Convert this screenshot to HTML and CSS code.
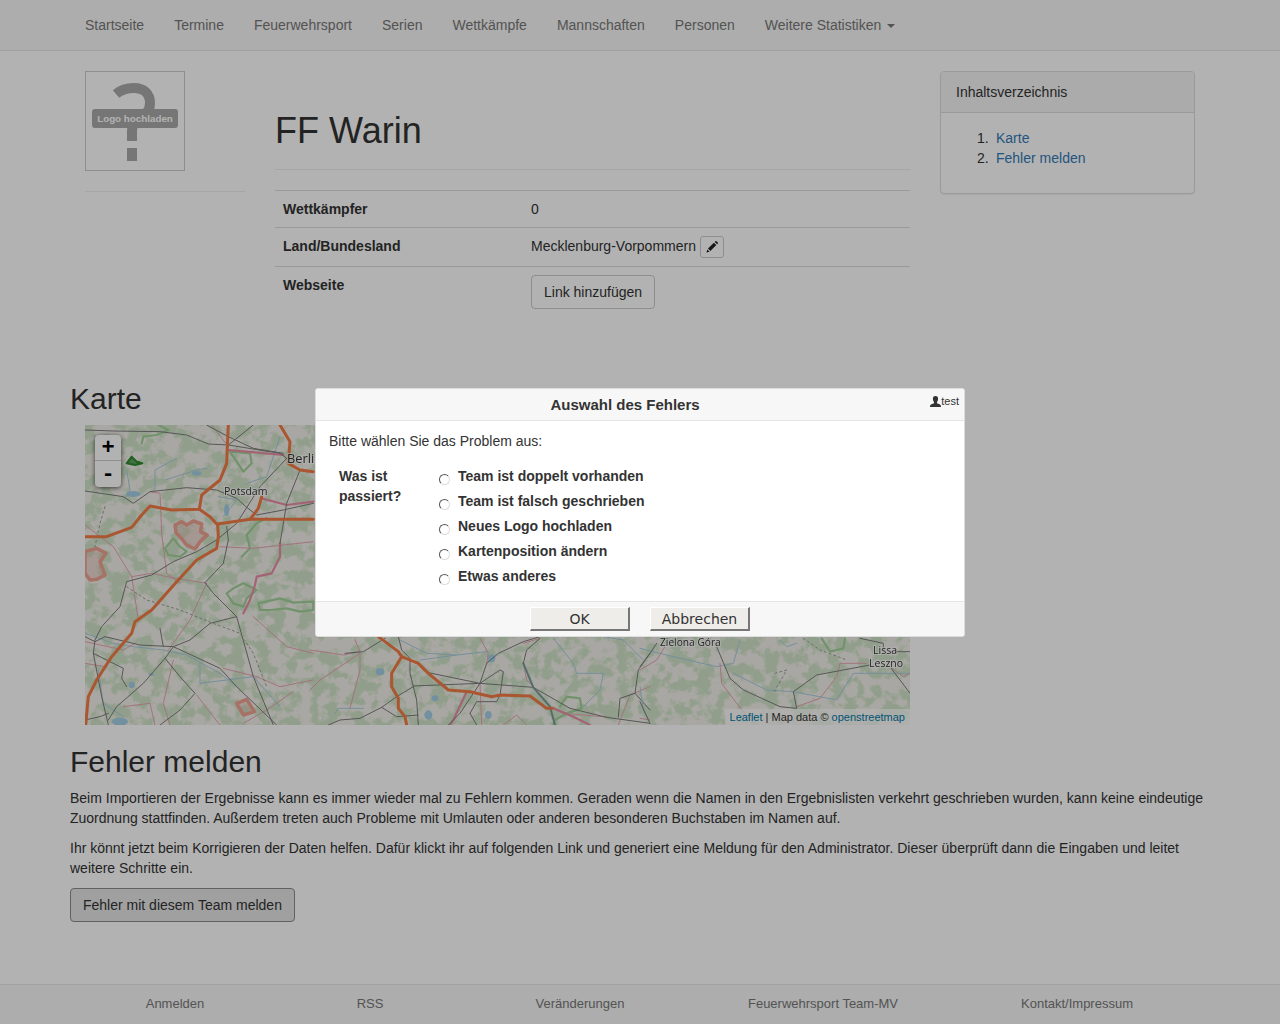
FILE: index.html
```html
<!DOCTYPE html>
<html lang="de">
<head>
<meta charset="utf-8">
<title>FF Warin</title>
<link rel="stylesheet" href="styles.css">
</head>
<body>
<nav class="navbar">
  <ul class="nav-list">
    <li><a href="#">Startseite</a></li>
    <li><a href="#">Termine</a></li>
    <li><a href="#">Feuerwehrsport</a></li>
    <li><a href="#">Serien</a></li>
    <li><a href="#">Wettkämpfe</a></li>
    <li><a href="#">Mannschaften</a></li>
    <li><a href="#">Personen</a></li>
    <li><a href="#">Weitere Statistiken <b class="caret"></b></a></li>
  </ul>
</nav>

<main class="container">
  <div class="top-row">
    <div class="logo-col">
      <div class="logo-box">
        <svg class="logo-mark" width="98" height="98" viewBox="0 0 98 98"><path class="logo-mark-stroke" d="M30 22 C36 17 43 16 48 16 C58 16 64 22 64 31 C64 40 58 44 52 48 C48 51 46 54 46 59 L46 69"/><rect class="logo-mark-dot" x="41" y="76" width="10" height="13"/></svg>
        <span class="logo-label">Logo hochladen</span>
      </div>
      <hr class="logo-rule">
    </div>
    <div class="main-col">
      <div class="page-header"><h1>FF Warin</h1></div>
      <table class="info-table">
        <tr><th>Wettkämpfer</th><td>0</td></tr>
        <tr><th>Land/Bundesland</th><td>Mecklenburg-Vorpommern <button class="btn-edit" type="button"><svg width="12" height="12" viewBox="0 0 12 12"><path d="M0.5 11.5 L1.2 8.4 L3.6 10.8 Z M2 7.6 L7.9 1.7 L10.3 4.1 L4.4 10 Z M8.7 0.9 L9.6 0 Q10 -.2 10.4 .2 L11.8 1.6 Q12.2 2 11.9 2.4 L11.1 3.3 Z" fill="#222"/></svg></button></td></tr>
        <tr><th>Webseite</th><td><button class="btn" type="button">Link hinzufügen</button></td></tr>
      </table>
    </div>
    <aside class="toc-panel">
      <div class="toc-heading">Inhaltsverzeichnis</div>
      <div class="toc-body">
        <ol class="toc-list">
          <li><a href="#">Karte</a></li>
          <li><a href="#">Fehler melden</a></li>
        </ol>
      </div>
    </aside>
  </div>

  <h2 class="title-karte">Karte</h2>
  <div class="map">
    <svg class="map-svg" width="825" height="300" viewBox="0 0 825 300">
      <defs>
        <filter id="forest" x="0" y="0" width="100%" height="100%" color-interpolation-filters="sRGB">
          <feTurbulence type="fractalNoise" baseFrequency="0.075" numOctaves="5" seed="11"/>
          <feColorMatrix type="matrix" values="0 0 0 0 .81  0 0 0 0 .89  0 0 0 0 .78  6 0 0 0 -2.6"/>
        </filter>
      </defs>
      <rect class="land" width="825" height="300"/>
      <rect width="825" height="300" filter="url(#forest)"/>

      <g transform="translate(-5 -5) scale(.33333)">
        <polygon class="protected" points="285,315 305,305 320,315 340,303 365,312 362,335 382,345 360,365 345,387 320,375 300,350 288,338"/>
        <polygon class="protected" points="15,395 50,385 78,400 60,425 75,465 50,478 30,480 15,460"/>
        <polygon class="protected" points="470,850 500,838 523,875 490,885"/>
        <polygon class="park" points="255,385 280,355 298,378 320,395 300,410 265,405"/>
        <polygon class="park" points="440,520 460,505 490,490 530,510 500,535 490,560 460,550"/>
        <polygon class="park" points="535,550 600,535 640,548 700,545 700,570 660,575 620,565 570,570 540,570"/>
        <polyline class="park" points="485,410 510,385 500,345 530,310 560,295"/>
        <polyline class="park" points="185,70 190,50 230,45 265,30 235,15"/>
        <polygon class="park" points="450,95 510,100 515,130 490,155 470,125"/>
        <polygon class="park-dark" points="140,130 155,110 170,125 187,130 165,135"/>

        <polyline class="river" points="130,240 150,210 140,150"/>
        <polyline class="river" points="225,210 225,150 290,115"/>
        <polyline class="river" points="255,180 350,150 380,145"/>
        <polyline class="river" points="415,230 470,240 430,290"/>
        <polyline class="river" points="500,190 560,170 600,50"/>
        <polyline class="river" points="15,640 100,670 160,680 250,690 320,705 420,760 470,800"/>
        <polyline class="river" points="360,730 360,790 520,770 600,860"/>
        <polyline class="river" points="55,750 70,850 130,890"/>
        <ellipse class="lake" cx="160" cy="222" rx="22" ry="9"/>
        <ellipse class="lake" cx="350" cy="160" rx="14" ry="7"/>
        <ellipse class="lake" cx="440" cy="270" rx="8" ry="18"/>
        <ellipse class="lake" cx="155" cy="795" rx="9" ry="10"/>
        <ellipse class="lake" cx="120" cy="905" rx="24" ry="12"/>
        <ellipse class="lake" cx="215" cy="763" rx="8" ry="5"/>

        <polyline class="road" points="15,315 100,380 155,470 175,600"/>
        <polyline class="road" points="210,215 240,220 245,340 260,460 300,490"/>
        <polyline class="road" points="380,490 330,600 265,690"/>
        <polyline class="road" points="520,590 620,680 700,700"/>
        <polyline class="road" points="15,665 130,690 165,670"/>
        <polyline class="road" points="15,730 75,740"/>
        <polyline class="road" points="280,720 250,850 270,915"/>
        <polyline class="road" points="130,860 210,850 225,915"/>
        <polyline class="road" points="350,825 400,890 420,915"/>
        <polyline class="road" points="430,745 530,770 600,800 700,780"/>
        <polyline class="road" points="490,910 560,870 640,815"/>
        <polyline class="road" points="420,380 520,385 700,365"/>
        <polyline class="road" points="395,15 445,80"/>
        <polyline class="road" points="155,470 215,460 260,470 380,490"/>
        <polyline class="road-major" points="445,90 610,105"/>
        <polyline class="road-major" points="545,235 620,255 700,245"/>
        <polyline class="road-major" points="600,370 600,410 575,460 530,470 525,495 510,540 490,580"/>

        <polyline class="rail" points="15,30 100,33 240,35 320,45 385,72 445,75 600,100 620,115"/>
        <polyline class="rail" points="380,15 445,50 520,85 610,100"/>
        <polyline class="rail" points="520,15 445,75"/>
        <polyline class="rail" points="15,213 130,230 160,250 210,215 320,203 410,210 470,235 500,262 530,285 610,270 700,250"/>
        <polyline class="rail" points="620,115 540,200 470,310 410,360 350,395 280,425 215,465 140,485 120,560 65,620 45,660 40,700 65,830 85,915"/>
        <polyline class="rail" points="375,488 430,430 445,360 440,320"/>
        <polyline class="rail" points="375,488 400,520 470,590 390,610 330,660 280,680 255,715 190,790 110,860 85,900"/>
        <polyline class="rail" points="15,650 45,665 75,650 180,675 280,680 420,745 470,800 590,915"/>
        <polyline class="rail" points="470,590 520,770 580,915"/>
        <polyline class="rail" points="660,150 620,250 605,340 600,370"/>
        <polyline class="rail" points="255,715 300,770 345,820 300,870 240,915"/>
        <polyline class="rail" points="40,700 130,745 125,775 140,800"/>
        <polyline class="rail" points="240,625 250,680"/>
        <polyline class="rail" points="15,900 60,890 85,880"/>
        <polyline class="dashed" points="75,260 60,310 45,380"/>
        <polyline class="dashed" points="140,500 200,540 300,570 400,610 480,640 520,700 560,800"/>

        <polyline class="motorway" points="445,15 442,80 440,130 420,180 365,225 358,268 275,270 210,258 185,285 155,322 80,350 15,350"/>
        <polyline class="motorway" points="358,268 390,290 413,315 415,350 410,385 350,420 290,485 215,570 165,605 155,640 95,710 50,780 25,830 17,915"/>
        <polyline class="motorway" points="413,312 510,298 700,298"/>
        <polyline class="motorway" points="510,298 535,265 545,230"/>
        <polyline class="motorway" points="600,15 630,65 625,130 660,150 700,155"/>
      </g>

      <g transform="translate(225 205) scale(.33333)">
        <polyline class="river" points="270,30 350,70 440,75 530,65"/>
        <polyline class="river" points="330,90 440,75"/>
        <polyline class="river" points="730,25 790,100 800,130 880,130 870,180 820,230"/>
        <polyline class="river" points="75,250 85,235 160,235"/>
        <polyline class="river" points="880,20 940,30 1000,90"/>
        <ellipse class="lake" cx="210" cy="125" rx="13" ry="11"/>
        <ellipse class="lake" cx="375" cy="205" rx="10" ry="9"/>
        <ellipse class="lake" cx="355" cy="255" rx="12" ry="14"/>
        <ellipse class="lake" cx="535" cy="255" rx="10" ry="12"/>
        <ellipse class="lake" cx="545" cy="85" rx="11" ry="12"/>
        <polyline class="road" points="0,60 100,75 150,65 135,30"/>
        <polyline class="road" points="150,70 30,150 0,180"/>
        <polyline class="road" points="510,25 535,70 530,100"/>
        <polyline class="road-major" points="470,185 430,270 420,285"/>
        <polyline class="road" points="120,235 150,120 150,70"/>
        <polyline class="road" points="580,285 620,255 650,285"/>
        <polyline class="road" points="640,100 650,150 670,170"/>
        <polyline class="road" points="640,40 690,25"/>
        <polyline class="road" points="510,160 515,285"/>
        <polyline class="road" points="730,235 760,250 900,262"/>
        <polyline class="road" points="925,285 960,195 1020,170"/>
        <polyline class="park" points="750,230 770,200 810,205 815,235 770,250 735,270 730,285"/>
        <polyline class="rail" points="265,20 275,60 300,85 300,130 310,170 260,200 215,232 150,265 90,270 55,285"/>
        <polyline class="rail" points="310,168 510,160 670,172 780,235 890,262 1020,280"/>
        <polyline class="rail" points="355,128 510,160 530,100 565,70 640,35 690,20"/>
        <polyline class="rail" points="510,160 570,120 580,125 570,195"/>
        <polyline class="rail" points="510,160 450,250 415,285"/>
        <polyline class="rail" points="480,250 500,215 560,215 570,195"/>
        <polyline class="rail" points="480,250 500,285"/>
        <polyline class="rail" points="310,170 320,210 325,285"/>
        <polyline class="rail" points="215,232 260,260 325,255"/>
        <polyline class="rail" points="105,70 160,65 225,25"/>
        <polyline class="rail-teal" points="640,100 670,172 720,230 735,285"/>
        <polyline class="rail" points="640,100 650,60 690,25"/>
        <polyline class="rail" points="1020,70 985,120 975,190 930,205 925,262"/>
        <polyline class="rail" points="975,190 1020,240"/>
        <polyline class="motorway" points="205,20 265,65 275,80 245,130 245,170 265,205 265,235 285,260 290,285"/>
        <polyline class="motorway" points="275,80 325,100 355,130 415,180 480,185 545,200 570,195 660,198 710,235 730,235"/>
        <polyline class="road-major" points="730,235 790,260 840,285"/>
      </g>

      <g transform="translate(555 205) scale(.33333)">
        <polyline class="river" points="0,55 100,80 230,110 280,100 300,30"/>
        <polyline class="river" points="0,170 10,240 30,280"/>
        <polyline class="river" points="280,130 380,180 460,185 590,210 640,130 700,130 810,130"/>
        <polyline class="river" points="420,30 440,50 470,40"/>
        <polyline class="road" points="0,120 50,90 75,50"/>
        <polyline class="road" points="240,100 245,160 290,220 340,280"/>
        <polyline class="road" points="470,230 540,205 590,140 600,100 680,100"/>
        <polyline class="road" points="0,265 30,270"/>
        <polyline class="road" points="750,110 790,140 810,130"/>
        <polyline class="park" points="545,25 570,65 610,55 615,25"/>
        <polyline class="dashed" points="405,130 440,120 400,190"/>
        <polyline class="dashed" points="490,25 540,60 620,90"/>
        <polyline class="rail" points="230,50 270,145 310,180 420,230 470,235 460,185 530,135 690,105"/>
        <polyline class="rail" points="50,40 30,70 0,110"/>
        <polyline class="rail" points="660,25 730,40 730,60"/>
        <polyline class="rail" points="750,110 810,190"/>
        <polyline class="rail" points="0,215 30,280"/>
        <polyline class="rail" points="765,65 810,65"/>
      </g>

      <text class="city city-big" x="202" y="38">Berli</text>
      <text class="city" x="139" y="70">Potsdam</text>
      <text class="city city-small" x="575" y="221">Zielona Góra</text>
      <text class="city" x="788" y="229">Lissa</text>
      <text class="city" x="784" y="242">Leszno</text>
    </svg>
    <div class="zoom-control">
      <a class="zoom-btn" href="#">+</a>
      <a class="zoom-btn" href="#">-</a>
    </div>
    <div class="attribution"><a href="#">Leaflet</a> | Map data © <a href="#">openstreetmap</a></div>
  </div>

  <h2 class="title-fehler">Fehler melden</h2>
  <p>Beim Importieren der Ergebnisse kann es immer wieder mal zu Fehlern kommen. Geraden wenn die Namen in den Ergebnislisten verkehrt geschrieben wurden, kann keine eindeutige Zuordnung stattfinden. Außerdem treten auch Probleme mit Umlauten oder anderen besonderen Buchstaben im Namen auf.</p>
  <p>Ihr könnt jetzt beim Korrigieren der Daten helfen. Dafür klickt ihr auf folgenden Link und generiert eine Meldung für den Administrator. Dieser überprüft dann die Eingaben und leitet weitere Schritte ein.</p>
  <button class="btn btn-active" type="button">Fehler mit diesem Team melden</button>
</main>

<footer class="footer">
  <a href="#">Anmelden</a>
  <a href="#">RSS</a>
  <a href="#">Veränderungen</a>
  <a href="#">Feuerwehrsport Team-MV</a>
  <a href="#">Kontakt/Impressum</a>
</footer>

<div class="overlay"></div>

<section class="dialog">
  <header class="dialog-head">
    <span class="dialog-title">Auswahl des Fehlers</span>
    <span class="dialog-user"><svg width="11" height="11" viewBox="0 0 11 11"><path d="M5.5 0 C7.3 0 8.2 1.3 8.1 3 C8 4.6 7.3 5.8 6.9 6.3 L7 7.2 C8.5 7.9 11 8.3 11 10.2 L11 11 L0 11 L0 10.2 C0 8.3 2.5 7.9 4 7.2 L4.1 6.3 C3.7 5.8 3 4.6 2.9 3 C2.8 1.3 3.7 0 5.5 0 Z" fill="#333"/></svg>test</span>
  </header>
  <div class="dialog-body">
    <p class="dialog-intro">Bitte wählen Sie das Problem aus:</p>
    <div class="dialog-form">
      <div class="form-label">Was ist passiert?</div>
      <div class="form-options">
        <label class="option"><input type="radio" name="problem"><span>Team ist doppelt vorhanden</span></label>
        <label class="option"><input type="radio" name="problem"><span>Team ist falsch geschrieben</span></label>
        <label class="option"><input type="radio" name="problem"><span>Neues Logo hochladen</span></label>
        <label class="option"><input type="radio" name="problem"><span>Kartenposition ändern</span></label>
        <label class="option"><input type="radio" name="problem"><span>Etwas anderes</span></label>
      </div>
    </div>
  </div>
  <footer class="dialog-foot">
    <button class="dialog-btn" type="button">OK</button>
    <button class="dialog-btn" type="button">Abbrechen</button>
  </footer>
</section>
</body>
</html>
```
FILE: styles.css
```css
* { box-sizing: border-box; }
html, body { height: 100%; }
body {
  margin: 0;
  min-height: 1024px;
  display: flex;
  flex-direction: column;
  font-family: "Liberation Sans", Arial, sans-serif;
  font-size: 14px;
  line-height: 20px;
  color: #333;
  background: #fff;
}
a { color: #337ab7; text-decoration: none; }

.navbar {
  height: 51px;
  flex: none;
  background: #f8f8f8;
  border-bottom: 1px solid #e7e7e7;
  padding-left: 70px;
}
.nav-list { display: flex; margin: 0; padding: 0; list-style: none; }
.nav-list a { display: block; padding: 15px; color: #777; }
.caret {
  display: inline-block;
  width: 0;
  height: 0;
  margin-left: 2px;
  vertical-align: middle;
  border-top: 4px solid #777;
  border-left: 4px solid transparent;
  border-right: 4px solid transparent;
}

.container { padding: 20px 70px 0; flex: none; }
.top-row { display: flex; padding-left: 15px; align-items: flex-start; }
.logo-col { width: 160px; flex: none; margin-right: 30px; }
.logo-box {
  position: relative;
  width: 100px;
  height: 100px;
  border: 1px solid #ccc;
  background: #fff;
}
.logo-mark { position: absolute; left: 0; top: 0; }
.logo-mark-stroke { fill: none; stroke: #aaa; stroke-width: 10px; }
.logo-mark-dot { fill: #aaa; }
.logo-label {
  position: absolute;
  left: 6px;
  top: 37px;
  width: 86px;
  height: 19px;
  background: #aaa;
  border-radius: 3px;
  color: #fff;
  font-size: 9.8px;
  font-weight: bold;
  line-height: 19px;
  text-align: center;
}
.logo-rule { margin: 20px 0 0; border: 0; border-top: 1px solid #eee; }

.main-col { width: 635px; flex: none; margin-right: 30px; }
.page-header {
  margin: 40px 0 20px;
  padding-bottom: 8px;
  border-bottom: 1px solid #eee;
}
h1 {
  margin: 0 0 10px;
  font-size: 36px;
  font-weight: 500;
  line-height: 39.6px;
}
.info-table { width: 100%; border-collapse: collapse; table-layout: fixed; margin-bottom: 20px; }
.info-table th, .info-table td {
  padding: 8px;
  border-top: 1px solid #ddd;
  vertical-align: top;
  text-align: left;
}
.info-table th { width: 248px; }
.btn {
  display: inline-block;
  height: 34px;
  padding: 6px 12px;
  border: 1px solid #ccc;
  border-radius: 4px;
  background: #fff;
  color: #333;
  font: 14px/20px "Liberation Sans", Arial, sans-serif;
}
.btn-active { background: #e6e6e6; border-color: #8c8c8c; }
.btn-edit {
  display: inline-flex;
  align-items: center;
  justify-content: center;
  width: 24px;
  height: 22px;
  padding: 0;
  border: 1px solid #ccc;
  border-radius: 3px;
  background: #fff;
  vertical-align: middle;
}

.toc-panel {
  width: 255px;
  flex: none;
  height: 123px;
  border: 1px solid #ddd;
  border-radius: 4px;
  background: #fff;
  box-shadow: 0 1px 1px rgba(0,0,0,.05);
}
.toc-heading {
  height: 41px;
  padding: 10px 15px;
  background: #f5f5f5;
  border-bottom: 1px solid #ddd;
  border-radius: 3px 3px 0 0;
}
.toc-body { padding: 15px; }
.toc-list { margin: 0; padding-left: 40px; list-style: none; counter-reset: toc; }
.toc-list li { counter-increment: toc; }
.toc-list li::before {
  content: counter(toc) ".";
  display: inline-block;
  width: 19px;
  margin-left: -19px;
}

h2 { margin: 0 0 10px; font-size: 30px; font-weight: 500; line-height: 33px; }
.title-karte { margin-top: 45px; }
.title-fehler { margin-top: 20px; }
p { margin: 0 0 10px; }

.map {
  position: relative;
  width: 825px;
  height: 300px;
  margin-left: 15px;
  overflow: hidden;
}
.map-svg { display: block; filter: blur(.4px); }
.map-svg polyline, .map-svg polygon, .map-svg ellipse { vector-effect: non-scaling-stroke; stroke-linejoin: round; stroke-linecap: round; }
.land { fill: #f3f0ea; }
.motorway { fill: none; stroke: #f47c45; stroke-width: 3px; }
.road { fill: none; stroke: #eaa5b4; stroke-width: 1px; }
.road-major { fill: none; stroke: #ea8fa6; stroke-width: 2.2px; }
.rail { fill: none; stroke: #7d7d7d; stroke-width: 1px; }
.rail-teal { fill: none; stroke: #7b9c9c; stroke-width: 2px; }
.dashed { fill: none; stroke: #9aa095; stroke-width: 1px; stroke-dasharray: 2 3; }
.river { fill: none; stroke: #a8cde0; stroke-width: 1px; }
.lake { fill: #a4cfe6; stroke: none; }
.protected { fill: rgba(225,170,160,.3); stroke: #efa393; stroke-width: 3.5px; }
.park { fill: none; stroke: #a3d39a; stroke-width: 2.2px; }
.park-dark { fill: #5ca35c; stroke: #2f8a2f; stroke-width: 2px; }
.city {
  font-family: "Open Sans", "Liberation Sans", sans-serif;
  font-size: 10.5px;
  fill: #333;
  paint-order: stroke;
  stroke: rgba(255,255,255,.7);
  stroke-width: 2px;
}
.city-small { font-size: 10.2px; }
.city-big { font-size: 12.8px; }

.zoom-control {
  position: absolute;
  left: 10px;
  top: 10px;
  width: 26px;
  border-radius: 4px;
  box-shadow: 0 1px 5px rgba(0,0,0,.65);
  background: #fff;
}
.zoom-btn {
  display: block;
  height: 26px;
  color: #000;
  font: bold 22px/27px "Liberation Mono", monospace;
  text-align: center;
}
.zoom-btn:first-child { border-bottom: 1px solid #ccc; }
.attribution {
  position: absolute;
  right: 0;
  bottom: 0;
  padding: 0 5px;
  background: rgba(255,255,255,.7);
  font-size: 11px;
  line-height: 16px;
  color: #333;
}
.attribution a { color: #0078a8; }

.footer {
  margin-top: auto;
  height: 40px;
  flex: none;
  display: grid;
  grid-template-columns: 210px 180px 240px 246px 262px;
  padding: 0 0 2px 70px;
  align-items: center;
  background: #f8f8f8;
  border-top: 1px solid #e7e7e7;
  font-size: 13px;
  text-align: center;
}
.footer a { color: #777; }

.overlay { position: fixed; inset: 0; background: rgba(0,0,0,.3); }

.dialog {
  position: absolute;
  left: 315px;
  top: 388px;
  width: 650px;
  height: 249px;
  display: flex;
  flex-direction: column;
  background: #fff;
  border: 1px solid #ddd;
  border-radius: 3px;
}
.dialog-head {
  position: relative;
  height: 32px;
  flex: none;
  padding-right: 30px;
  background: #f7f7f7;
  border-bottom: 1px solid #e5e5e5;
  border-radius: 3px 3px 0 0;
  text-align: center;
}
.dialog-title { font-size: 15px; font-weight: bold; line-height: 31px; }
.dialog-user {
  position: absolute;
  right: 5px;
  top: 6px;
  display: flex;
  align-items: center;
  font-size: 11px;
  line-height: 13px;
}
.dialog-body { flex: 1; padding: 10px 13px 0; }
.dialog-intro { margin: 0 0 15px; }
.dialog-form { display: flex; padding-left: 10px; }
.form-label { width: 100px; flex: none; padding-right: 30px; font-weight: bold; }
.form-options { display: flex; flex-direction: column; }
.option { display: flex; align-items: flex-start; height: 25px; font-weight: bold; }
.option input {
  appearance: none;
  width: 11px;
  height: 11px;
  margin: 8px 8px 0 0;
  flex: none;
  border: 1px solid;
  border-color: #555 #ddd #ddd #555;
  border-radius: 50%;
  background: #fff;
}
.dialog-foot {
  height: 35px;
  flex: none;
  display: flex;
  justify-content: center;
  gap: 20px;
  padding-top: 5px;
  background: #f7f7f7;
  border-top: 1px solid #e5e5e5;
  border-radius: 0 0 3px 3px;
}
.dialog-btn {
  width: 100px;
  height: 24px;
  padding: 0;
  border: 1px solid;
  border-width: 1px 2px 2px 1px;
  border-color: #fff #777 #777 #fff;
  background: #efedea;
  color: #333;
  font: 14px/20px "DejaVu Sans", sans-serif;
}
```
